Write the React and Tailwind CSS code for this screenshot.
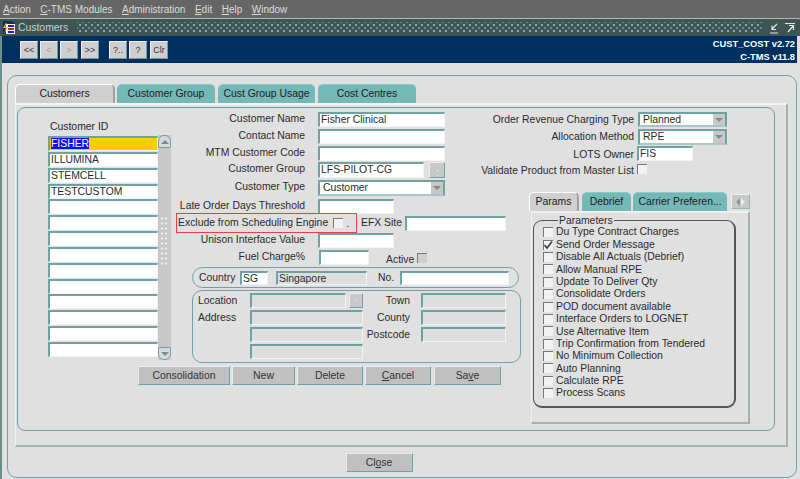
import React from 'react';

const menus = [
    { key: 'A', rest: 'ction' },
    { key: 'C', rest: '-TMS Modules' },
    { key: 'A', rest: 'dministration' },
    { key: 'E', rest: 'dit' },
    { key: 'H', rest: 'elp' },
    { key: 'W', rest: 'indow' },
];

const customers = ['FISHER', 'ILLUMINA', 'STEMCELL', 'TESTCUSTOM', '', '', '', '', '', '', '', '', '', ''];

const params = [
    ['Du Type Contract Charges', false],
    ['Send Order Message', true],
    ['Disable All Actuals (Debrief)', false],
    ['Allow Manual RPE', false],
    ['Update To Deliver Qty', false],
    ['Consolidate Orders', false],
    ['POD document available', false],
    ['Interface Orders to LOGNET', false],
    ['Use Alternative Item', false],
    ['Trip Confirmation from Tendered', false],
    ['No Minimum Collection', false],
    ['Auto Planning', false],
    ['Calculate RPE', false],
    ['Process Scans', false],
];

function Input({ value, className = '', disabled, highlight }) {
    const bg = highlight ? 'bg-[#ffcc00]' : disabled ? 'bg-[#dedede]' : 'bg-white';
    return (
        <div className={`h-full border-t-2 border-l-2 border-r border-b border-t-[#6fa3a3] border-l-[#6fa3a3] border-r-[#f4f4f4] border-b-[#f4f4f4] px-px text-[10.4px] leading-[12px] whitespace-nowrap overflow-hidden ${bg} ${className}`}>
            {value}
        </div>
    );
}

function Label({ children, className = '' }) {
    return <div className={`text-right whitespace-nowrap text-[10.4px] leading-[14px] ${className}`}>{children}</div>;
}

function Row({ label, children, className = '' }) {
    return (
        <div className={`flex items-stretch ${className}`}>
            <Label className="w-[130px]">{label}</Label>
            <div className="ml-[13px] flex items-stretch">{children}</div>
        </div>
    );
}

function Select({ value, className = '' }) {
    return (
        <div className={`flex items-center h-full bg-white border-2 border-[#6fa3a3] border-b-[#a9c6c6] pl-[3px] text-[10.4px] ${className}`}>
            <span className="flex-1">{value}</span>
            <span className="w-[12px] h-full bg-[#c8c8c8] flex items-center justify-center">
                <span className="w-0 h-0 border-x-[4px] border-x-transparent border-t-[4px] border-t-[#7d8d8d]" />
            </span>
        </div>
    );
}

function Check({ checked, disabled, className = '' }) {
    return (
        <span className={`relative block w-[10px] h-[10px] shrink-0 border-t border-l border-[#777] ${disabled ? 'bg-[#d0d0d0]' : 'bg-[#f2f2f2]'} ${className}`}>
            {checked && (
                <svg viewBox="0 0 10 10" className="absolute -top-px -left-px w-[10px] h-[10px]">
                    <path d="M1.5 5 L4 8 L9 1.5" fill="none" stroke="#2f4f4f" strokeWidth="1.8" />
                </svg>
            )}
        </span>
    );
}

function Button({ children, className = '' }) {
    return (
        <div className={`flex items-center justify-center bg-[#c0c0c0] border border-t-[#ececec] border-l-[#ececec] border-r-[#6fa3a3] border-b-[#6fa3a3] text-[10.4px] text-[#333] whitespace-nowrap ${className}`}>
            {children}
        </div>
    );
}

function ToolButton({ children, className = '' }) {
    return (
        <div className={`w-[18px] h-[18px] flex items-center justify-center bg-[#cfcfcf] border border-t-[#efefef] border-l-[#efefef] border-r-[#6f9aa0] border-b-[#6f9aa0] text-[9px] leading-none ${className}`}>
            {children}
        </div>
    );
}

function Tab({ children, active, className = '' }) {
    return (
        <div className={`flex items-center justify-center rounded-t-[5px] text-[10.4px] text-[#222] whitespace-nowrap ${active ? 'bg-[#cfcfcf] border-t border-l border-t-white border-l-white border-r-2 border-r-[#a0a0a0]' : 'bg-[#74b8b8] border-t border-t-[#8fcaca]'} ${className}`}>
            {children}
        </div>
    );
}

export default function App() {
    return (
        <div className="w-[800px] h-[479px] overflow-hidden flex flex-col bg-[#e0e0e0] text-[#2b2b2b] font-['Liberation_Sans',Arial,sans-serif]">
            {/* Menu */}
            <div className="h-[18px] bg-[#666666] flex items-center gap-[9.5px] pl-[3px] pt-[1px] text-[10px] text-[#dcdcdc]">
                {menus.map((m, i) => (
                    <span key={i}><span className="underline">{m.key}</span>{m.rest}</span>
                ))}
            </div>

            {/* Title bar */}
            <div className="h-[18px] bg-[#3e5553] border-t border-t-[#b5b5b5] flex items-center pl-[2px] pr-[2px] text-[#c9d2d2] text-[10.4px]">
                <svg viewBox="0 0 14 15" className="w-[14px] h-[15px] shrink-0">
                    <path d="M1 1 H9 L13 3 V14 H1Z" fill="#10304a" />
                    <rect x="4" y="4" width="9" height="10" fill="#f4f4f4" />
                    <rect x="6" y="5" width="6" height="2" fill="#2020c0" />
                    <rect x="6" y="8" width="6" height="2" fill="#d02020" />
                    <rect x="6" y="11" width="6" height="2" fill="#2020c0" />
                    <path d="M4 3 L1 8 L4 8 L2 14 L6 7 L3 7 L5 3Z" fill="#f0d020" />
                </svg>
                <span className="ml-[2px] w-[59px]">Customers</span>
                <div className="flex-1 h-[11px] bg-[radial-gradient(circle,#7faea5_0.7px,transparent_0.9px),radial-gradient(circle,#6a8f88_0.7px,transparent_0.9px)] bg-[length:6px_6px] bg-[position:0_0,3px_3px]" />
                <svg viewBox="0 0 30 12" className="w-[30px] h-[12px] ml-[5px] shrink-0">
                    <path d="M2 11 H10 M9 2 L4 7 M4 3.5 V7.5 H8 M17 1.5 H27 M20 10 L25 4 M21 3.5 H25.5 V8" stroke="#e8e8e8" strokeWidth="1.2" fill="none" />
                </svg>
            </div>

            {/* Toolbar */}
            <div className="h-[27px] bg-[#003060] border-l-2 border-r-[3px] border-l-[#6f8f8f] border-r-[#e0e0e0] flex pl-[18px] pt-[5px] pr-[2px]">
                <div className="flex gap-[2px] text-[#333]">
                    <ToolButton>&lt;&lt;</ToolButton>
                    <ToolButton className="text-[#a0a0a0]">&lt;</ToolButton>
                    <ToolButton className="text-[#a0a0a0]">&gt;</ToolButton>
                    <ToolButton className="ml-px">&gt;&gt;</ToolButton>
                    <ToolButton className="ml-[8px]">?..</ToolButton>
                    <ToolButton>?</ToolButton>
                    <ToolButton className="ml-px">Clr</ToolButton>
                </div>
                <div className="ml-auto -mt-[3px] text-right text-white text-[9.3px] font-bold leading-[13px]">
                    <div>CUST_COST v2.72</div>
                    <div>C-TMS v11.8</div>
                </div>
            </div>

            {/* Body */}
            <div className="flex-1 border-l-2 border-l-[#6f8f8f] pl-[5px] pr-[3px] pt-[12px]">
                <div className="h-[403px] border border-[#6fa3a3] rounded-[10px] pl-[7px] pr-[8px] pt-[8px]">
                    <div className="flex h-[19px] gap-[2px]">
                        <Tab active className="w-[100px]">Customers</Tab>
                        <Tab className="w-[98px]">Customer Group</Tab>
                        <Tab className="w-[97px] ml-px">Cust Group Usage</Tab>
                        <Tab className="w-[98px] ml-px">Cost Centres</Tab>
                    </div>

                    {/* Tab page */}
                    <div className="h-[344px] border-t-2 border-t-[#f4f4f4] border-l border-l-[#f4f4f4] border-r-2 border-r-[#a8b0b0] border-b-2 border-b-[#a8b0b0] pl-[1px] pr-[11px] pt-[2px]">
                        <div className="h-[324px] border border-[#6fa3a3] rounded-[8px] flex">

                            {/* Customer list */}
                            <div className="w-[153px] shrink-0 pl-[30px] pt-[11px]">
                                <div className="pl-[2px] h-[17px] text-[10.4px] whitespace-nowrap">Customer ID</div>
                                <div className="flex">
                                    <div className="w-[110px] flex flex-col gap-[0.85px]">
                                        {customers.map((c, i) => (
                                            <div key={i} className="h-[15px]">
                                                <Input highlight={i === 0} value={i === 0 ? <span className="bg-[#1010e0] text-white">{c}</span> : c} />
                                            </div>
                                        ))}
                                    </div>
                                    <div className="relative w-[13px] h-[225px] -mt-px bg-[#c8c8c8] flex flex-col justify-between">
                                        <div className="h-[13px] rounded-t-[6px] bg-[#d8d8d8] border border-[#6fa3a3] flex items-center justify-center">
                                            <span className="w-0 h-0 border-x-[4px] border-x-transparent border-b-[4px] border-b-[#7d8d8d]" />
                                        </div>
                                        <div className="absolute left-[2px] top-[81px] w-[8px] h-[50px] bg-[radial-gradient(circle,#f5f5f5_1px,transparent_1.2px)] bg-[length:4px_5px]" />
                                        <div className="h-[13px] rounded-b-[6px] bg-[#d8d8d8] border border-[#6fa3a3] flex items-center justify-center">
                                            <span className="w-0 h-0 border-x-[4px] border-x-transparent border-t-[4px] border-t-[#7d8d8d]" />
                                        </div>
                                    </div>
                                </div>
                            </div>

                            {/* Main fields */}
                            <div className="w-[351px] shrink-0 pl-[4px] pt-[4px]">
                                <Row label="Customer Name" className="h-[15px]"><Input className="w-[127px]" value="Fisher Clinical" /></Row>
                                <Row label="Contact Name" className="h-[15px] mt-[2px]"><Input className="w-[127px]" /></Row>
                                <Row label="MTM Customer Code" className="h-[15px] mt-[2px]"><Input className="w-[127px]" /></Row>
                                <Row label="Customer Group" className="h-[16px] mt-[1px]">
                                    <Input className="w-[106px]" value="LFS-PILOT-CG" />
                                    <Button className="w-[16px] ml-[5px] bg-[#c8c8c8]"><span className="w-px h-px bg-white" /></Button>
                                </Row>
                                <Row label="Customer Type" className="h-[16px] mt-[2px]"><Select className="w-[127px]" value="Customer" /></Row>
                                <Row label="Late Order Days Threshold" className="h-[15px] mt-[3px]"><Input className="w-[76px]" /></Row>

                                <div className="flex items-center h-[20px] -mt-px ml-px">
                                    <div className="w-[181px] h-full border border-[#e84040] flex items-center pl-[1px] text-[10.4px] whitespace-nowrap">
                                        <span>Exclude from Scheduling Engine</span>
                                        <Check className="ml-[5px]" />
                                        <span className="ml-[3px] mt-[3px] leading-none">.</span>
                                    </div>
                                    <span className="ml-[4px] w-[39px] text-[10.4px] whitespace-nowrap">EFX Site</span>
                                    <div className="ml-[5px] h-[15px]"><Input className="w-[101px]" /></div>
                                </div>

                                <Row label="Unison Interface Value" className="h-[15px]"><Input className="w-[76px]" /></Row>
                                <div className="flex h-[15px] mt-[2px]">
                                    <Label className="w-[130px]">Fuel Charge%</Label>
                                    <div className="ml-[14px]"><Input className="w-[50px] h-[15px]" /></div>
                                    <span className="ml-[17px] mt-[2px] text-[10.4px]">Active</span>
                                    <Check disabled className="ml-[3px] mt-[3px]" />
                                </div>

                                {/* Country */}
                                <div className="flex items-center h-[21px] w-[327px] ml-[17px] mt-[2px] border border-[#6fa3a3] rounded-full pl-[6px] text-[10.4px] whitespace-nowrap">
                                    <span className="w-[35px]">Country</span>
                                    <div className="ml-[6px] h-[14px]"><Input className="w-[28px]" value="SG" /></div>
                                    <div className="ml-[8px] h-[14px]"><Input disabled className="w-[91px]" value="Singapore" /></div>
                                    <span className="ml-[11px] w-[16px]">No.</span>
                                    <div className="ml-[6px] h-[14px]"><Input className="w-[109px]" /></div>
                                </div>

                                {/* Address */}
                                <div className="w-[329px] h-[73px] ml-[17px] mt-[2px] border border-[#6fa3a3] rounded-[10px] pl-[5px] pt-[2px] text-[10.4px] whitespace-nowrap">
                                    <div className="flex h-[15px]">
                                        <span className="w-[52px]">Location</span>
                                        <Input disabled className="w-[96px]" />
                                        <Button className="w-[14px] ml-[3px] bg-[#c8c8c8]"><span className="w-px h-px bg-white" /></Button>
                                        <span className="w-[47px] text-right">Town</span>
                                        <Input disabled className="w-[85px] ml-[11px]" />
                                    </div>
                                    <div className="flex h-[15px] mt-[2px]">
                                        <span className="w-[52px]">Address</span>
                                        <Input disabled className="w-[113px]" />
                                        <span className="w-[47px] text-right">County</span>
                                        <Input disabled className="w-[85px] ml-[11px]" />
                                    </div>
                                    <div className="flex h-[15px] mt-[2px]">
                                        <span className="w-[52px]" />
                                        <Input disabled className="w-[113px]" />
                                        <span className="w-[47px] text-right">Postcode</span>
                                        <Input disabled className="w-[85px] ml-[11px]" />
                                    </div>
                                    <div className="flex h-[15px] mt-[2px]">
                                        <span className="w-[52px]" />
                                        <Input disabled className="w-[113px]" />
                                    </div>
                                </div>

                                {/* Buttons */}
                                <div className="flex h-[19px] gap-[2px] mt-[3px] -ml-[37px]">
                                    <Button className="w-[92px]">Consolidation</Button>
                                    <Button className="w-[63px]">New</Button>
                                    <Button className="w-[66px]">Delete</Button>
                                    <Button className="w-[66px]"><span><span className="underline">C</span>ancel</span></Button>
                                    <Button className="w-[67px] ml-px"><span>Sa<span className="underline">v</span>e</span></Button>
                                </div>
                            </div>

                            {/* Right column */}
                            <div className="flex-1 min-w-0 pt-[4px] whitespace-nowrap">
                                <div className="flex h-[15px] justify-end pr-[47px]">
                                    <span className="text-[10.4px] mr-[4px]">Order Revenue Charging Type</span>
                                    <Select className="w-[89px] shrink-0" value="Planned" />
                                </div>
                                <div className="flex h-[16px] mt-[2px] justify-end pr-[47px]">
                                    <span className="text-[10.4px] mr-[4px]">Allocation Method</span>
                                    <Select className="w-[89px] shrink-0" value="RPE" />
                                </div>
                                <div className="flex h-[15px] mt-[1px] pr-[81px] justify-end">
                                    <span className="text-[10.4px] mr-[3px] mt-[1px]">LOTS Owner</span>
                                    <Input className="w-[56px] shrink-0" value="FIS" />
                                </div>
                                <div className="flex h-[12px] mt-[3px] justify-end pr-[127px]">
                                    <span className="text-[10.4px] leading-[14px] mr-[3px]">Validate Product from Master List</span>
                                    <Check />
                                </div>

                                {/* Params */}
                                <div className="ml-[7px] mt-[16px]">
                                    <div className="flex h-[19px] gap-[2px] items-start">
                                        <Tab active className="w-[50px] h-[19px]">Params</Tab>
                                        <Tab className="w-[49px] h-[19px] ml-px">Debrief</Tab>
                                        <Tab className="w-[94px] h-[19px]">Carrier Preferen...</Tab>
                                        <div className="w-[19px] h-[15px] ml-[2px] mt-[2px] bg-[#c8c8c8] border border-t-[#efefef] border-l-[#efefef] border-r-[#9fb5b5] border-b-[#9fb5b5] flex items-center justify-center gap-px">
                                            <span className="w-0 h-0 border-y-[4px] border-y-transparent border-r-[4px] border-r-[#8a9a9a]" />
                                            <span className="w-0 h-0 border-y-[4px] border-y-transparent border-l-[4px] border-l-[#f0f0f0]" />
                                        </div>
                                    </div>
                                    <div className="w-[219px] h-[213px] ml-[2px] border-t-2 border-l border-r-2 border-b-2 border-t-[#f0f0f0] border-l-[#f0f0f0] border-r-[#a8b0b0] border-b-[#a8b0b0] pl-[1px] pt-[7px]">
                                        <div className="relative w-[203px] h-[188px] border border-r-2 border-b-2 border-[#555] rounded-[9px] pl-[9px] pt-[5px]">
                                            <span className="absolute left-[24px] -top-[7px] bg-[#e0e0e0] px-px text-[10.4px] leading-[13px]">Parameters</span>
                                            {params.map(([label, checked]) => (
                                                <div key={label} className="flex items-center h-[12.4px] text-[10.4px] whitespace-nowrap">
                                                    <Check checked={checked} />
                                                    <span className="ml-[3px]">{label}</span>
                                                </div>
                                            ))}
                                        </div>
                                    </div>
                                </div>
                            </div>
                        </div>
                    </div>

                    {/* Close */}
                    <div className="flex justify-center pr-[45px] pt-[6px]">
                        <Button className="w-[67px] h-[19px]"><span>Cl<span className="underline">o</span>se</span></Button>
                    </div>
                </div>
            </div>
        </div>
    );
}
